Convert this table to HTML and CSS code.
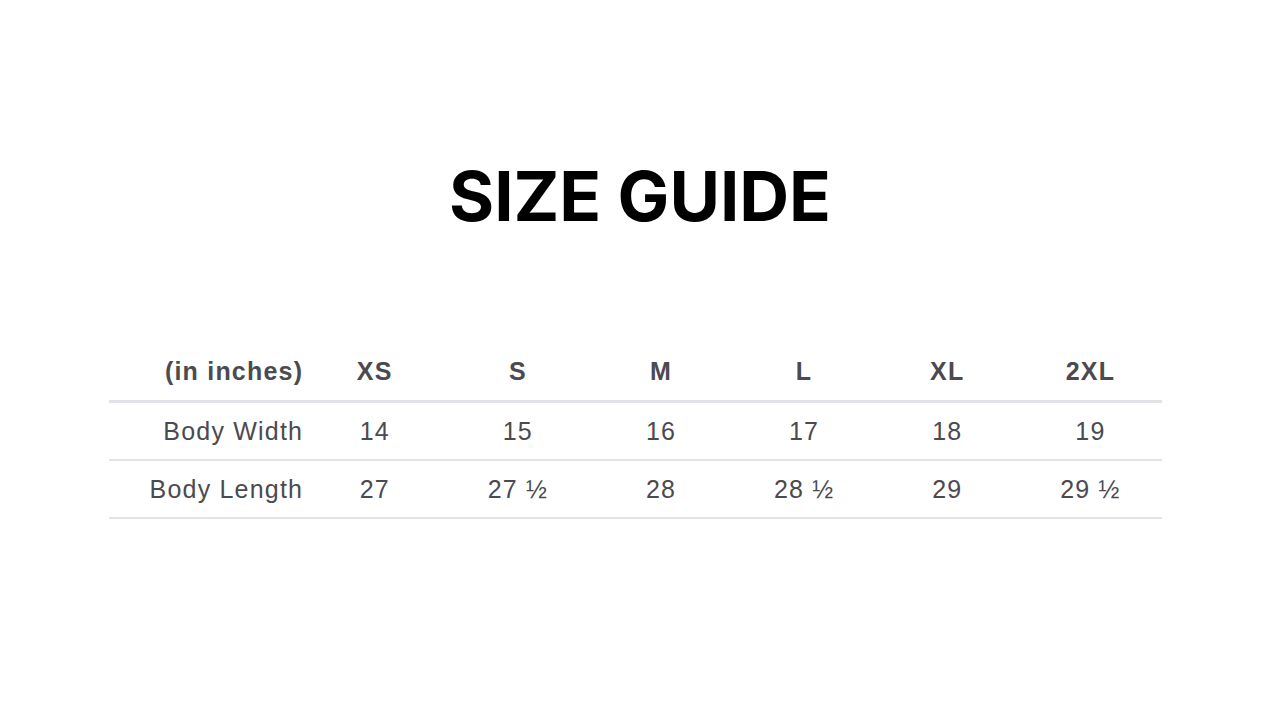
FILE: index.html
```html
<!DOCTYPE html>
<html lang="en">
<head>
<meta charset="utf-8">
<title>Size Guide</title>
<link rel="stylesheet" href="styles.css">
</head>
<body>
<main class="page">
  <h1 class="title">SIZE GUIDE</h1>
  <table class="sizes">
    <thead>
      <tr>
        <th class="label">(in inches)</th>
        <th>XS</th><th>S</th><th>M</th><th>L</th><th>XL</th><th>2XL</th>
      </tr>
    </thead>
    <tbody>
      <tr>
        <td class="label">Body Width</td>
        <td>14</td><td>15</td><td>16</td><td>17</td><td>18</td><td>19</td>
      </tr>
      <tr>
        <td class="label">Body Length</td>
        <td>27</td><td>27 ½</td><td>28</td><td>28 ½</td><td>29</td><td>29 ½</td>
      </tr>
    </tbody>
  </table>
</main>
</body>
</html>
```

FILE: styles.css
```css
html, body {
  margin: 0;
  padding: 0;
  background: #ffffff;
}

.page {
  width: 1280px;
  height: 720px;
  display: flex;
  flex-direction: column;
  align-items: center;
}

.title {
  margin: 154px 0 0;
  font-family: Inter, "Open Sans", sans-serif;
  font-weight: 700;
  font-size: 69px;
  line-height: 84px;
  color: #000000;
  letter-spacing: 0;
}

.sizes {
  align-self: flex-start;
  margin-top: 104px;
  margin-left: 109px;
  width: 1053px;
  border-collapse: collapse;
  table-layout: fixed;
  font-family: "Liberation Sans", Arial, sans-serif;
  font-size: 25px;
  letter-spacing: 1.2px;
  color: #4a4a50;
}

.sizes th,
.sizes td {
  width: 143px;
  padding: 0;
  text-align: center;
  height: 56px;
}

.sizes th {
  font-weight: 700;
  border-bottom: 3px solid #e2e2e8;
  height: 58px;
  vertical-align: middle;
}

.sizes td {
  border-bottom: 2px solid #e4e4e8;
}

.sizes .label {
  width: 194px;
  text-align: right;
}
```
